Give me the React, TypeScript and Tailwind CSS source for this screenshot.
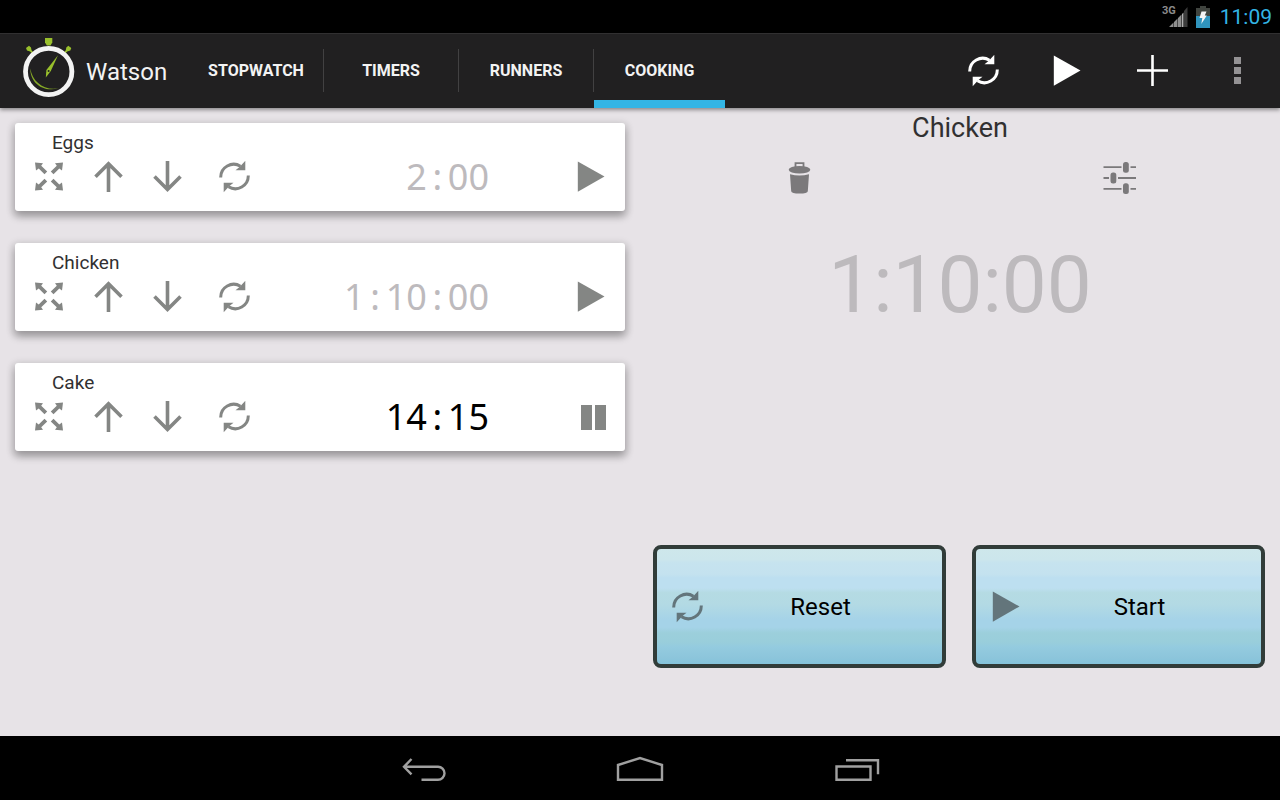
import { useState } from 'react'
import clsx from 'clsx'

interface IconProps {
  className?: string
}

interface Timer {
  name: string
  time: string
  running: boolean
}

const tabs = [
  { name: 'STOPWATCH', width: 'w-[134px]' },
  { name: 'TIMERS', width: 'w-[134px]' },
  { name: 'RUNNERS', width: 'w-[134px]' },
  { name: 'COOKING', width: 'w-[131px]' },
]

const initialTimers: Timer[] = [
  { name: 'Eggs', time: '2:00', running: false },
  { name: 'Chicken', time: '1:10:00', running: false },
  { name: 'Cake', time: '14:15', running: true },
]

function ResetIcon({ className }: IconProps) {
  return (
    <svg className={clsx('h-8 w-8 shrink-0', className)} viewBox="0 0 32 32" fill="currentColor" aria-hidden="true">
      <path d="M2.7 16.5A13 13 0 0 1 22.5 5.2M30.3 14.5A13 13 0 0 1 10.5 25.8" fill="none" stroke="currentColor" strokeWidth="3" />
      <path d="M27.3-.2v9.400h-9.800l4.300-3.400zM5.700 31.200v-9.400h9.800l-4.300 3.400z" />
    </svg>
  )
}

function PlayIcon({ className }: IconProps) {
  return (
    <svg className={clsx('h-8 w-8 shrink-0', className)} viewBox="0 0 32 32" fill="currentColor" aria-hidden="true">
      <path d="M2.8.5 29.5 15.5 2.800 30.700z" />
    </svg>
  )
}

function PauseIcon({ className }: IconProps) {
  return (
    <svg className={clsx('h-8 w-8 shrink-0', className)} viewBox="0 0 32 32" fill="currentColor" aria-hidden="true">
      <path d="M6 4h11v25H6zM20 4h11v25H20z" />
    </svg>
  )
}

function ExpandIcon({ className }: IconProps) {
  return (
    <svg className={clsx('h-8 w-8 shrink-0', className)} viewBox="0 0 32 32" fill="currentColor" aria-hidden="true">
      <path d="M2 1.500l8 .8-1.800 2.500 6 5.700-2.700 2.800-5.800-5.900-2.700 2.100z" />
      <path d="M30 1.500l-8 .8 1.800 2.500-6 5.700 2.700 2.800 5.800-5.900 2.700 2.100z" />
      <path d="M2 29.500l8-.8-1.800-2.500 6-5.700-2.700-2.800-5.800 5.900-2.700-2.100z" />
      <path d="M30 29.500l-8-.8 1.800-2.500-6-5.700 2.700-2.800 5.800 5.900 2.700-2.100z" />
    </svg>
  )
}

function ArrowIcon({ down }: { down?: boolean }) {
  return (
    <svg className="h-8 w-8 shrink-0" viewBox="0 0 32 32" fill="none" stroke="currentColor" strokeWidth="3.6" aria-hidden="true">
      <path d={down ? 'M16.5 0v28.500M3.500 15.500l13 13 13-13' : 'M16.500 31V2.800M3.500 15.800l13-13 13 13'} />
    </svg>
  )
}

function TrashIcon() {
  return (
    <svg className="h-8 w-8" viewBox="0 0 32 32" fill="currentColor" aria-hidden="true">
      <path d="M11.500 5V1.200h8V5" fill="none" stroke="currentColor" strokeWidth="1.8" />
      <ellipse cx="15.500" cy="7.800" rx="10.800" ry="3.800" />
      <path d="M6 12.300q9.500 2.400 19 0L23.800 29.300q-.3 2.300-8.300 2.300t-8.300-2.300z" />
    </svg>
  )
}

function SlidersIcon() {
  return (
    <svg className="h-8 w-[34px]" viewBox="0 0 34 32" fill="currentColor" aria-hidden="true">
      <path d="M.5 5.200h18M27.500 5.200H33M.5 16H6M15 16h18M.5 26.800h18M27.500 26.800H33" stroke="currentColor" strokeWidth="1.800" />
      <rect x="20" y="0" width="5.800" height="10.800" rx="2.500" />
      <rect x="7.500" y="10.600" width="5.800" height="10.800" rx="2.500" />
      <rect x="20" y="21.200" width="5.800" height="10.800" rx="2.500" />
    </svg>
  )
}

function Logo() {
  return (
    <svg className="h-[62px] w-14 shrink-0" viewBox="0 1 56 62" aria-hidden="true">
      <g fill="#99c02c">
        <path d="M24 1h7.300v4.500L29.500 8.500h-3.600L24 5.500z" />
        <path d="M5 11l3-2.200 2 1.800.5 2.600 2 2.200-1.400 1-2-2-3.100-1zM50.300 11l-3-2.200-2 1.800-.5 2.600-2 2.200 1.400 1 2-2 3.100-1z" />
        <path d="M37 18.300 29.800 34l-5 6.500.6-7.500z" />
        <circle cx="27.600" cy="33.900" r="1" fill="#212021" />
      </g>
      <path d="M9.300 31.500C9 44 20 56 37.800 51.300 23 54 11.500 45 9.300 31.500z" fill="#86aa26" />
      <circle cx="27.700" cy="34.500" r="23.200" fill="none" stroke="#f3f3f3" strokeWidth="4.800" />
    </svg>
  )
}

function StatusBar() {
  return (
    <div className="flex h-[33px] shrink-0 items-center justify-end bg-black pr-2 text-[#33b5e5]">
      <span className="mb-3 text-[11px] leading-none font-bold text-[#8b8b8b]">3G</span>
      <svg className="mr-2 -ml-2 h-[22px] w-5" viewBox="0 0 20 22" aria-hidden="true">
        <path d="M1 21 5.500 16.500V21zM6 21v-5l3.500-3.500V21zM10 21v-9l3.500-3.500V21z" fill="#8f8f8f" />
        <path d="M14 21V8l1.500-1.500V21z" fill="#b0b0b0" />
        <path d="M16 21V5l3.500-4v20z" fill="#3c3c3c" />
      </svg>
      <svg className="mr-[10px] h-[22px] w-[14px]" viewBox="0 0 14 22" aria-hidden="true">
        <path d="M4 0h6v2h4v20H0V2h4z" fill="#40443f" />
        <path d="M0 10h14v12H0z" fill="#3094bd" />
        <path d="M5.500 5.500h5L8.800 9.500h2L5.300 18l1-6H3.500z" fill="#f5f5f5" />
      </svg>
      <span className="text-[21px] leading-6">11:09</span>
    </div>
  )
}

function TimeText({ value }: { value: string }) {
  // the colon takes a full digit cell
  return (
    <>
      {value.split(':').map((part, i) => (
        <span key={i}>
          {i > 0 && <span className="inline-block w-[21px] text-center">:</span>}
          {part}
        </span>
      ))}
    </>
  )
}

interface TimerCardProps {
  timer: Timer
  onOpen: () => void
  onToggle: () => void
}

function TimerCard({ timer, onOpen, onToggle }: TimerCardProps) {
  return (
    <article className="rounded-[3px] bg-white px-[18px] pt-2 pb-[18px] shadow-[0_5px_8px_rgba(0,0,0,0.3),0_2px_6px_4px_rgba(0,0,0,0.07)]">
      <h2 className="ml-[19px] text-[19px] leading-6 text-[#313031]">{timer.name}</h2>
      <div className="mt-1.5 flex h-8 items-center text-[#848684]">
        <button aria-label="Open" onClick={onOpen}>
          <ExpandIcon />
        </button>
        <button aria-label="Move up" className="ml-[27px]">
          <ArrowIcon />
        </button>
        <button aria-label="Move down" className="ml-[27px]">
          <ArrowIcon down />
        </button>
        <button aria-label="Reset" className="ml-[35px]">
          <ResetIcon />
        </button>
        <time
          className={clsx(
            "mr-[86px] ml-auto font-['Noto_Sans',sans-serif] text-4xl leading-8",
            timer.running ? 'text-black' : 'text-[#bdbabd]'
          )}
        >
          <TimeText value={timer.time} />
        </time>
        <button aria-label={timer.running ? 'Pause' : 'Start'} onClick={onToggle}>
          {timer.running ? <PauseIcon /> : <PlayIcon />}
        </button>
      </div>
    </article>
  )
}

const panelButton =
  'flex h-[123px] items-center rounded-lg border-4 border-[#313c39] pr-1 pl-[14px] text-2xl text-black bg-[linear-gradient(to_bottom,#cee7eb_0%,#cce6ec_9%,#c6e3ef_12%,#c4e2ef_22%,#bddff0_25%,#bddff0_34%,#b5dbe3_38%,#b3dae4_48%,#a5d3e8_62%,#a5d3e8_68%,#9ccfdb_73%,#99cedb_81%,#94cbdf_85%,#8cc5db_95%,#84c3da_100%)]'

export default function App() {
  const [timers, setTimers] = useState(initialTimers)
  const [activeTab, setActiveTab] = useState('COOKING')
  const [selected, setSelected] = useState(1)
  const current = timers[selected]

  const toggle = (index: number) => {
    setTimers(timers.map((t, i) => (i === index ? { ...t, running: !t.running } : t)))
  }

  return (
    <div className="flex min-h-screen flex-col bg-[#e7e3e7] font-[Roboto,sans-serif]">
      <StatusBar />

      {/* Action bar */}
      <header className="flex h-[75px] shrink-0 items-center border-t border-[#313031] bg-[#212021] text-[#f3f3f3] shadow-[0_2px_4px_rgba(0,0,0,0.4)]">
        <div className="flex w-[189px] items-center pb-1 pl-[21px]">
          <Logo />
          <h1 className="mt-1.5 ml-[9px] text-2xl">Watson</h1>
        </div>
        <nav className="flex h-full items-center">
          {tabs.map((tab, i) => (
            <div key={tab.name} className="flex h-full items-center">
              {i > 0 && <div className="mb-0.5 h-[43px] w-px bg-[#424142]" />}
              <button
                onClick={() => setActiveTab(tab.name)}
                className={clsx(
                  'h-full border-y-8 border-t-transparent text-base font-bold',
                  tab.width,
                  activeTab === tab.name ? 'border-b-[#33b5e5]' : 'border-b-transparent'
                )}
              >
                {tab.name}
              </button>
            </div>
          ))}
        </nav>
        <div className="ml-auto flex text-white">
          <button aria-label="Reset all" className="flex w-[85px] justify-center">
            <ResetIcon />
          </button>
          <button aria-label="Start all" className="flex w-[85px] justify-center">
            <PlayIcon className="mr-0.5" />
          </button>
          <button aria-label="Add timer" className="flex w-[85px] justify-center">
            <svg className="h-8 w-8" viewBox="0 0 32 32" stroke="currentColor" strokeWidth="2.6" aria-hidden="true">
              <path d="M0 15.500h31M15.500 0v31" />
            </svg>
          </button>
          <button aria-label="More options" className="flex w-[85px] justify-center text-[#949294]">
            <svg className="h-8 w-8" viewBox="0 0 32 32" fill="currentColor" aria-hidden="true">
              <path d="M12 2h7v7h-7zM12 12h7v7h-7zM12 22h7v7h-7z" />
            </svg>
          </button>
        </div>
      </header>

      <main className="grid flex-1 grid-cols-2">
        <section className="flex flex-col gap-8 p-[15px]">
          {timers.map((timer, i) => (
            <TimerCard key={timer.name} timer={timer} onOpen={() => setSelected(i)} onToggle={() => toggle(i)} />
          ))}
        </section>

        {/* Selected timer */}
        <section className="flex flex-col pb-[68px] text-center">
          <h2 className="pt-1 text-[27px] leading-8 text-[#313031]">{current.name}</h2>
          <div className="mt-[18px] grid grid-cols-2 text-[#7b797b]">
            <button aria-label="Delete" className="flex justify-center">
              <TrashIcon />
            </button>
            <button aria-label="Settings" className="flex justify-center">
              <SlidersIcon />
            </button>
          </div>
          <time className={clsx('mt-[51px] text-[80px] leading-20', current.running ? 'text-black' : 'text-[#bdbabd]')}>
            {current.time}
          </time>
          <div className="mt-auto grid grid-cols-2 gap-[26px] pr-[15px] pl-[13px]">
            <button className={panelButton}>
              <ResetIcon className="text-[#63757b]" />
              <span className="flex-1">Reset</span>
            </button>
            <button className={panelButton} onClick={() => toggle(selected)}>
              {current.running ? <PauseIcon className="text-[#63757b]" /> : <PlayIcon className="text-[#63757b]" />}
              <span className="flex-1">{current.running ? 'Pause' : 'Start'}</span>
            </button>
          </div>
        </section>
      </main>

      {/* System navigation */}
      <footer className="flex h-16 shrink-0 items-center justify-center bg-black pt-0.5 text-[#a0a0a0]">
        <button aria-label="Back" className="flex w-[216px] justify-center">
          <svg className="h-8 w-12" viewBox="0 0 48 32" fill="none" stroke="currentColor" strokeWidth="2.4" aria-hidden="true">
            <path d="M4 13.800h34a6.500 6.500 0 0 1 0 13H21.500M11.500 6 4 13.800l7.500 7.500" />
          </svg>
        </button>
        <button aria-label="Home" className="flex w-[216px] justify-center">
          <svg className="h-8 w-12" viewBox="0 0 48 32" fill="none" stroke="currentColor" strokeWidth="2.4" aria-hidden="true">
            <path d="M2 26.800V12L24 5l22 7v14.800z" />
          </svg>
        </button>
        <button aria-label="Recent apps" className="flex w-[216px] justify-center">
          <svg className="h-8 w-12" viewBox="0 0 48 32" fill="none" stroke="currentColor" strokeWidth="2.4" aria-hidden="true">
            <path d="M4.500 13.500h34v13.300h-34zM14 7.200h32v14" />
          </svg>
        </button>
      </footer>
    </div>
  )
}
